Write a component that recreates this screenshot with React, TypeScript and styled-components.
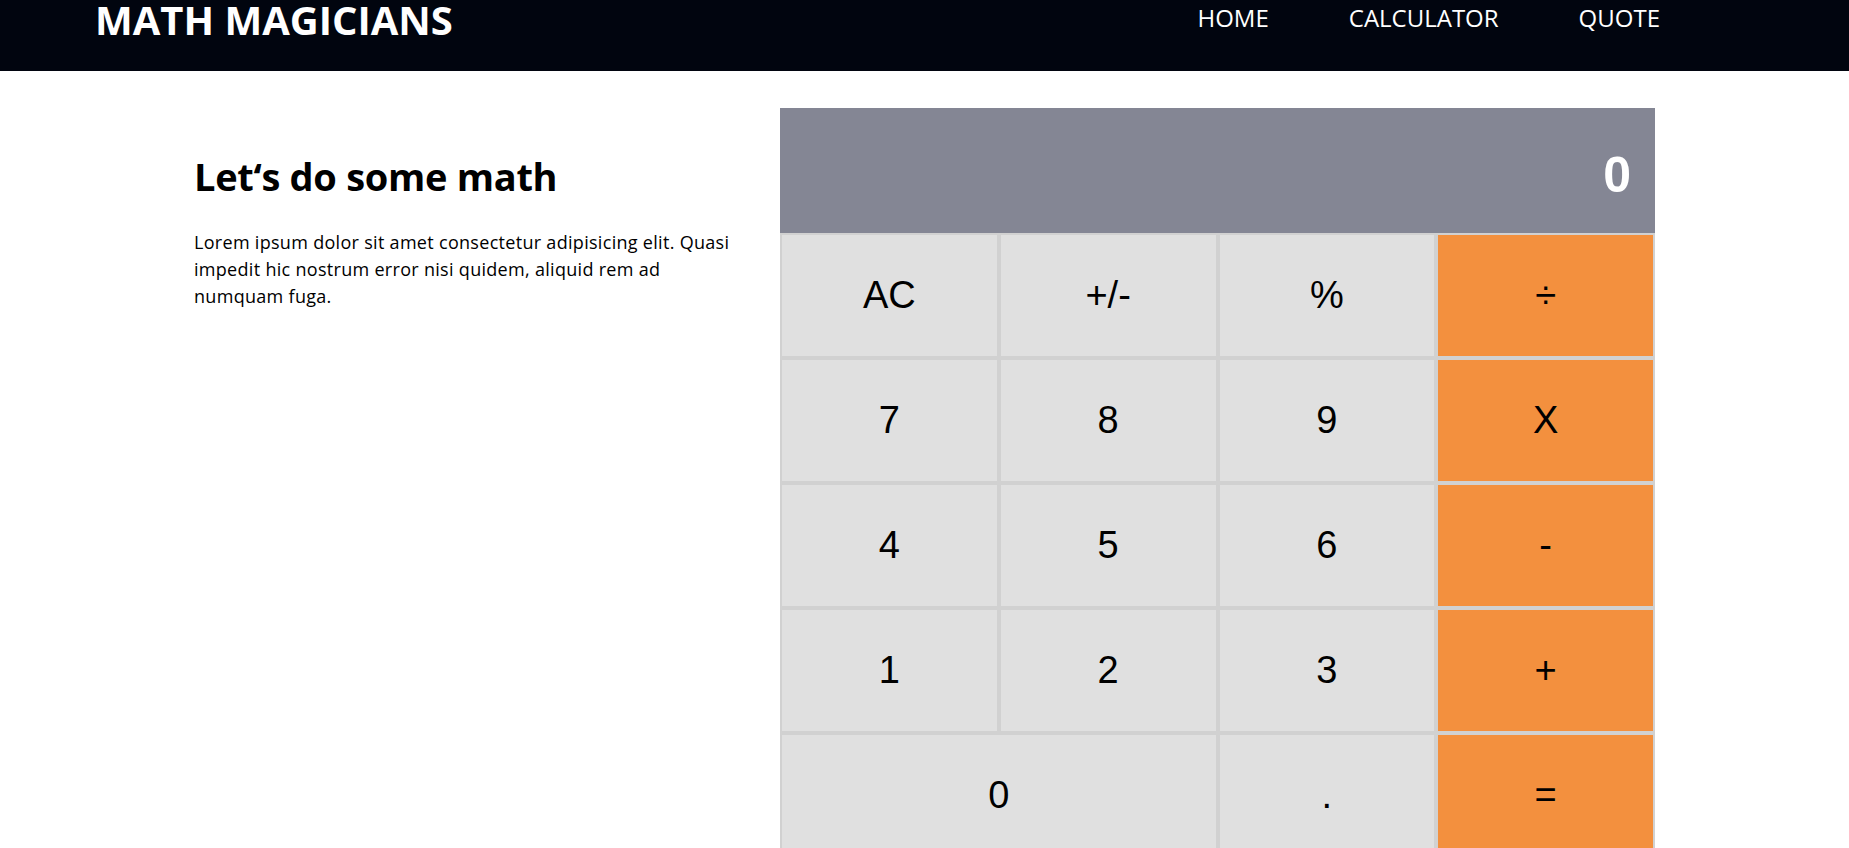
import styled, { createGlobalStyle } from "styled-components";

const GlobalStyle = createGlobalStyle`
  * {
    box-sizing: border-box;
  }

  body {
    margin: 0;
    background: #fff;
    font-family: "Open Sans", "Noto Sans", sans-serif;
    color: #000;
  }
`;

type Key = {
  label: string;
  operator?: boolean;
  wide?: boolean;
};

const keys: Key[] = [
  { label: "AC" },
  { label: "+/-" },
  { label: "%" },
  { label: "÷", operator: true },
  { label: "7" },
  { label: "8" },
  { label: "9" },
  { label: "X", operator: true },
  { label: "4" },
  { label: "5" },
  { label: "6" },
  { label: "-", operator: true },
  { label: "1" },
  { label: "2" },
  { label: "3" },
  { label: "+", operator: true },
  { label: "0", wide: true },
  { label: "." },
  { label: "=", operator: true },
];

const links = ["HOME", "CALCULATOR", "QUOTE"];

const App = () => {
  return (
    <>
      <GlobalStyle />
      <Header>
        <Logo>MATH MAGICIANS</Logo>
        <Nav>
          {links.map((link) => (
            <NavLink key={link} href="#">
              {link}
            </NavLink>
          ))}
        </Nav>
      </Header>
      <Main>
        <Intro>
          <Title>Let‘s do some math</Title>
          <Text>
            Lorem ipsum dolor sit amet consectetur adipisicing elit. Quasi
            impedit hic nostrum error nisi quidem, aliquid rem ad numquam fuga.
          </Text>
        </Intro>
        <Calculator>
          <Display>0</Display>
          <Keypad>
            {keys.map((key) => (
              <KeyButton
                key={key.label}
                type="button"
                $operator={key.operator}
                $wide={key.wide}
              >
                {key.label}
              </KeyButton>
            ))}
          </Keypad>
        </Calculator>
      </Main>
    </>
  );
};

export default App;

const Header = styled.header`
  height: 71px;
  background: #01050f;
  display: flex;
  justify-content: space-between;
  align-items: flex-start;
  padding: 0 189px 0 95px;
`;

const Logo = styled.h1`
  margin: 0;
  font-size: 40px;
  line-height: 40px;
  font-weight: 700;
  color: #fff;
`;

const Nav = styled.nav`
  display: flex;
  gap: 80px;
  padding-top: 6px;
`;

const NavLink = styled.a`
  font-size: 24px;
  line-height: 24px;
  color: #fff;
  text-decoration: none;
`;

const Main = styled.main`
  display: flex;
  padding: 0 194px;
`;

const Intro = styled.section`
  flex: 1;
  display: flex;
  flex-direction: column;
  padding-top: 82px;
`;

const Title = styled.h2`
  margin: 0;
  font-size: 38px;
  line-height: 46px;
  font-weight: 700;
  letter-spacing: -0.3px;
`;

const Text = styled.p`
  margin: 30px 0 0;
  width: 545px;
  font-size: 18px;
  line-height: 27px;
  letter-spacing: 0.3px;
`;

const Calculator = styled.div`
  width: 875px;
  margin-top: 37px;
  display: flex;
  flex-direction: column;
  font-family: "Liberation Sans", Arial, sans-serif;
`;

const Display = styled.div`
  height: 125px;
  background: #848694;
  color: #fff;
  display: flex;
  align-items: center;
  justify-content: flex-end;
  padding: 8px 24px 0 0;
  font-size: 50px;
  font-weight: 700;
`;

const Keypad = styled.div`
  display: grid;
  grid-template-columns: repeat(4, 1fr);
  grid-auto-rows: 125px;
`;

const KeyButton = styled.button<{ $operator?: boolean; $wide?: boolean }>`
  grid-column: ${(props) => (props.$wide ? "span 2" : "span 1")};
  border: 2px solid #d1d1d1;
  background: ${(props) => (props.$operator ? "#f3903e" : "#e0e0e0")};
  color: #000;
  font-family: inherit;
  font-size: 38px;
  padding: 0;
  cursor: pointer;
`;
